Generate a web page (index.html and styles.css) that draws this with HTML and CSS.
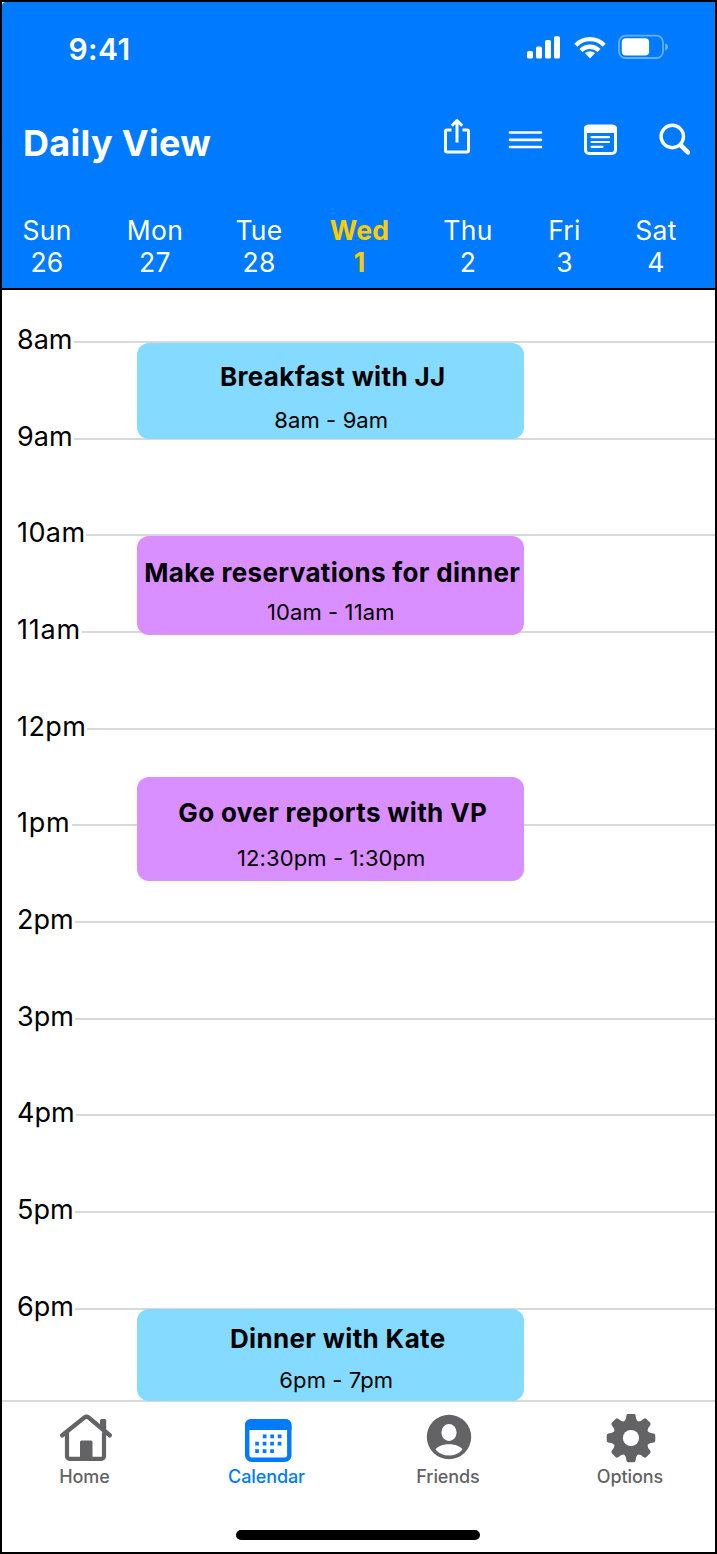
FILE: index.html
```html
<!DOCTYPE html>
<html lang="en">
<head>
<meta charset="utf-8">
<title>Daily View</title>
<link rel="stylesheet" href="styles.css">
</head>
<body>
<div class="phone">
  <header class="header">
    <div class="status">
      <span class="clock">9:41</span>
      <svg class="status-icons" width="144" height="28" viewBox="0 0 144 28" fill="#fff">
        <rect x="1" y="17" width="6" height="7.5" rx="1.6"/>
        <rect x="10" y="12.5" width="6" height="12" rx="1.6"/>
        <rect x="19" y="6" width="6" height="18.500" rx="1.6"/>
        <rect x="28" y="2.300" width="6" height="22.200" rx="1.6"/>
        <g fill="none" stroke="#fff" stroke-width="4.300">
          <path d="M49.800 11.200C57.500 3.100 70.500 3.100 78.200 11.200"/>
          <path d="M55 16.500C60 11.500 68 11.500 73 16.500"/>
        </g>
        <path d="M58.900 19.100Q64 15.300 69.100 19.100L64 24.500Z"/>
        <rect x="93" y="1.700" width="44" height="22.300" rx="6.500" fill="none" stroke="#fff" stroke-opacity=".4" stroke-width="1.800"/>
        <rect x="95.800" y="4.300" width="27.300" height="17.200" rx="4"/>
        <path d="M139.300 9.300Q142 10.600 142 13T139.300 16.700Z" fill-opacity=".45"/>
      </svg>
    </div>
    <div class="toolbar">
      <h1 class="title">Daily View</h1>
      <svg class="tools" width="250" height="40" viewBox="0 0 250 40" fill="none" stroke="#fff">
        <g stroke-width="3">
          <path d="M11.500 13H7a1.500 1.500 0 0 0-1.500 1.500V33.500a1.500 1.500 0 0 0 1.500 1.500H27a1.500 1.500 0 0 0 1.500-1.500V14.500A1.500 1.500 0 0 0 27 13H22.500"/>
          <path d="M17 25.500V4.500M11.800 8.700L17 3.500 22.200 8.700" stroke-linejoin="round"/>
        </g>
        <path d="M70 15.500H101M70 22.800H101M70 30H101" stroke-width="2.700" stroke-linecap="round"/>
        <rect x="145.500" y="9" width="30" height="27.500" rx="3.500" stroke-width="3"/>
        <path d="M144 16V11.500Q144 8 148 8H173Q177 8 177 11.500V16Z" fill="#fff" stroke="none"/>
        <path d="M151.500 20.200H169M151.500 25H169M151.500 29.800H162.500" stroke-width="2.200" stroke-linecap="round"/>
        <circle cx="232.300" cy="19.500" r="11.200" stroke-width="3.400"/>
        <path d="M240.500 28L248 35.300" stroke-width="4.600" stroke-linecap="round"/>
      </svg>
    </div>
    <div class="week">
      <div class="day">Sun<br>26</div>
      <div class="day">Mon<br>27</div>
      <div class="day">Tue<br>28</div>
      <div class="day today">Wed<br>1</div>
      <div class="day">Thu<br>2</div>
      <div class="day">Fri<br>3</div>
      <div class="day">Sat<br>4</div>
    </div>
  </header>
  <main class="agenda">
    <div class="hour"><span>8am</span></div>
    <div class="hour"><span>9am</span></div>
    <div class="hour wide"><span>10am</span></div>
    <div class="hour wider"><span>11am</span></div>
    <div class="hour wide"><span>12pm</span></div>
    <div class="hour wider"><span>1pm</span></div>
    <div class="hour"><span>2pm</span></div>
    <div class="hour"><span>3pm</span></div>
    <div class="hour"><span>4pm</span></div>
    <div class="hour"><span>5pm</span></div>
    <div class="hour"><span>6pm</span></div>
    <article class="event blue breakfast"><h2>Breakfast with JJ</h2><p>8am - 9am</p></article>
    <article class="event purple reservations"><h2>Make reservations for dinner</h2><p>10am - 11am</p></article>
    <article class="event purple reports"><h2>Go over reports with VP</h2><p>12:30pm - 1:30pm</p></article>
    <article class="event blue dinner"><h2>Dinner with Kate</h2><p>6pm - 7pm</p></article>
  </main>
  <nav class="tabs">
    <div class="tab">
      <svg width="56" height="52" viewBox="0 0 56 52" fill="none" stroke="currentColor">
        <path d="M10.500 19V43A2.500 2.500 0 0 0 13 45.500H45A2.500 2.500 0 0 0 47.500 43V19" stroke-width="4.200" transform="translate(-.5 -.7)"/>
        <path d="M5.300 21.300L27.500 3.400Q29.500 1.900 31.500 3.400L52.700 21.300" stroke-width="4.400" stroke-linecap="round" stroke-linejoin="round"/>
        <path d="M43 6.500Q43 5 44.500 5H48Q49.200 5 49.200 6.500V18L43 13Z" fill="currentColor" stroke="none"/>
        <path d="M23 45V28Q23 26.500 24.500 26.500H34Q35.500 26.500 35.500 28V45Z" fill="currentColor" stroke="none"/>
      </svg>
      <span>Home</span>
    </div>
    <div class="tab active">
      <svg width="56" height="52" viewBox="1 0 56 52" fill="none" stroke="currentColor">
        <rect x="9.200" y="7.200" width="42.100" height="38.600" rx="4.500" stroke-width="4.400"/>
        <path d="M7 16V11.500Q7 5 13.500 5H47Q53.500 5 53.500 11.500V16Z" fill="currentColor" stroke="none"/>
        <path d="M24.800 22.300H43.500M17.200 29.700H43.500M17.200 37.200H36" stroke-width="3.700" stroke-dasharray="3.700 3.800"/>
      </svg>
      <span>Calendar</span>
    </div>
    <div class="tab">
      <svg width="56" height="52" viewBox="1 0 56 52" fill="currentColor">
        <circle cx="30" cy="23" r="22.200"/>
        <ellipse cx="30" cy="18.500" rx="7.600" ry="8.500" fill="#fff"/>
        <path d="M16.500 35.500C19 32.400 23.500 30.300 30 30.300S41 32.400 43.500 35.500C40 39.600 35.400 41.600 30 41.600S20 39.600 16.500 35.500Z" fill="#fff"/>
      </svg>
      <span>Friends</span>
    </div>
    <div class="tab">
      <svg width="56" height="52" viewBox="0.500 0.500 56 52" fill="currentColor">
        <defs><path id="tooth" d="M22 9L24.300 5.500 25 1.800Q25.300 .200 27 .200H32Q33.700 .200 34 1.800L34.700 5.500 37 9Z"/></defs>
        <circle cx="29.500" cy="24.500" r="17.500"/>
        <use href="#tooth"/>
        <use href="#tooth" transform="rotate(45 29.500 24.500)"/>
        <use href="#tooth" transform="rotate(90 29.500 24.500)"/>
        <use href="#tooth" transform="rotate(135 29.500 24.500)"/>
        <use href="#tooth" transform="rotate(180 29.500 24.500)"/>
        <use href="#tooth" transform="rotate(225 29.500 24.500)"/>
        <use href="#tooth" transform="rotate(270 29.500 24.500)"/>
        <use href="#tooth" transform="rotate(315 29.500 24.500)"/>
        <circle cx="29.500" cy="24.500" r="8.100" fill="#fff"/>
      </svg>
      <span>Options</span>
    </div>
  </nav>
  <div class="home-bar"></div>
</div>
</body>
</html>
```
FILE: styles.css
```css
* { box-sizing: border-box; }
body { margin: 0; font-family: Inter, "Liberation Sans", sans-serif; color: #000; background: #fff; }
h1, h2, p { margin: 0; }
svg { display: block; flex: none; }

.phone { width: 717px; height: 1554px; border: 2px solid #000; display: flex; flex-direction: column; background: #fff; overflow: hidden; }

.header { height: 288px; background: #007aff; border-bottom: 2px solid #000; color: #fff; border-top-left-radius: 4px; }
.status { display: flex; justify-content: space-between; height: 96px; padding: 32px 45px 0 66.500px; }
.clock { font-size: 30px; line-height: 31px; font-weight: 600; letter-spacing: 0.4px; }
.toolbar { display: flex; justify-content: space-between; height: 114px; padding: 19px 25px 0 21px; }
.title { font-size: 36px; line-height: 53px; font-weight: 700; letter-spacing: 0.3px; white-space: nowrap; }
.week { display: grid; grid-template-columns: 90px 126px 82px 119px 98px 95px 88px; }
.day { font-size: 26.500px; line-height: 32px; text-align: center; letter-spacing: 0.3px; padding-top: 2px; }
.today { color: #ffcc00; font-weight: 700; letter-spacing: 0.2px; }

.agenda { position: relative; height: 1112px; padding-top: 28px; border-bottom: 2px solid #d9d9d9; flex: none; }
.hour { display: flex; align-items: center; height: 96.670px; padding: 0 0 48.670px 15px; }
.hour span { font-size: 27px; line-height: 44px; padding-bottom: 4px; }
.wide span { letter-spacing: 0.4px; }
.wider span { letter-spacing: 0.8px; }
.hour::after { content: ""; flex: 1; height: 2px; margin-left: 1px; background: #d9d9d9; }

.event { position: absolute; left: 135px; width: 386.500px; border-radius: 12px; padding-left: 5px; white-space: nowrap; display: flex; flex-direction: column; align-items: center; }
.event h2 { font-size: 26px; line-height: 32px; font-weight: 700; letter-spacing: 0.350px; }
.event p { font-size: 22px; line-height: 26px; margin-left: -3px; letter-spacing: 0.1px; }
.blue { background: #84dbff; }
.purple { background: #d98fff; }
.breakfast { top: 53px; height: 96px; padding-top: 18px; gap: 14px; }
.reservations { top: 246px; height: 98.500px; padding-top: 21px; padding-left: 4px; gap: 10px; }
.reports { top: 487px; height: 104px; padding-top: 20px; gap: 16px; }
.dinner { top: 1019px; height: 91.500px; padding-top: 14px; padding-left: 15px; gap: 12px; }

.tabs { display: grid; grid-template-columns: 165px 199px 164px 200px; padding-top: 12px; color: #636366; flex: none; }
.tab { display: flex; flex-direction: column; align-items: center; font-size: 18px; line-height: 22px; font-weight: 450; letter-spacing: -0.1px; }
.active { color: #007aff; }
.home-bar { width: 244px; height: 10px; border-radius: 5px; background: #000; margin: 42px 0 0 234px; flex: none; }
```
